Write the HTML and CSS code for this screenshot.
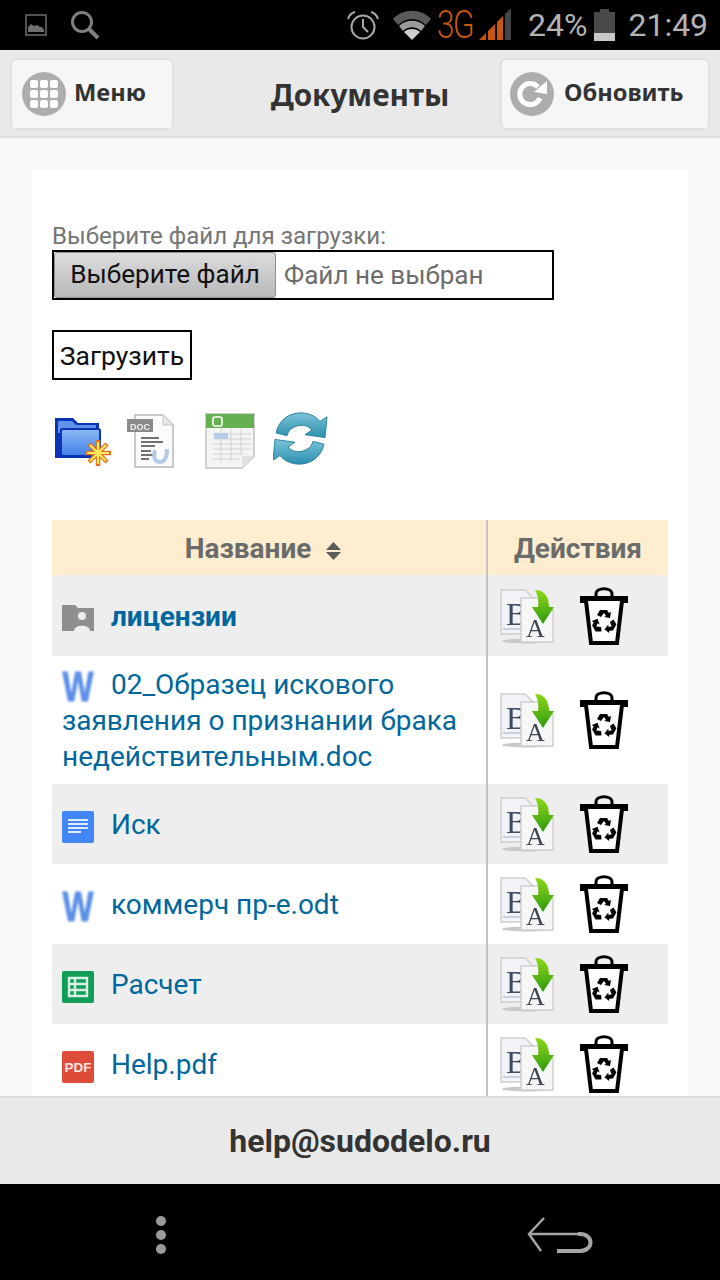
FILE: index.html
```html
<!DOCTYPE html>
<html lang="ru">
<head>
    <meta charset="UTF-8">
    <meta name="viewport" content="width=device-width, initial-scale=1.0">
    <title>Документы</title>
    <link rel="stylesheet" href="styles.css">
</head>
<body>
    <svg class="defs" width="0" height="0">
        <defs>
            <linearGradient id="arrow-green" x1="0" y1="0" x2="0" y2="1">
                <stop offset="0" stop-color="#8fd61c"/>
                <stop offset="1" stop-color="#2f9a0c"/>
            </linearGradient>
            <linearGradient id="folder-blue" x1="0" y1="0" x2="0" y2="1">
                <stop offset="0" stop-color="#8dbaf7"/>
                <stop offset="1" stop-color="#3f7fe6"/>
            </linearGradient>
            <linearGradient id="sync-blue" x1="0" y1="0" x2="0" y2="1">
                <stop offset="0" stop-color="#7cc4d8"/>
                <stop offset="1" stop-color="#2a8fb0"/>
            </linearGradient>
            <symbol id="convert" viewBox="0 0 56 56">
                <ellipse cx="28" cy="53" rx="26" ry="2.5" fill="#c9c9c9"/>
                <path d="M1 2h24l8 8v36H1z" fill="#f1f3f6" stroke="#cfcfcf" stroke-width="1.5"/>
                <text x="6" y="37" class="svg-serif" font-size="32" fill="#3a4a60">B</text>
                <path d="M3 41h20" stroke="#b7c6d8" stroke-width="1.5"/>
                <path d="M21 10h20l12 12v32H21z" fill="#f7f7f7" stroke="#cfcfcf" stroke-width="1.5"/>
                <text x="26" y="49" class="svg-serif" font-size="26" fill="#3a4656">A</text>
                <path d="M35 2c9 0 14 6 14 17h5L43 36 32 19h6c1-6 0-12-3-17z" fill="url(#arrow-green)"/>
            </symbol>
            <symbol id="trash" viewBox="0 0 48 58">
                <path d="M16 9V7c0-7 16-7 16 0v2" fill="none" stroke="#000" stroke-width="3"/>
                <rect x="0" y="9" width="48" height="7" fill="#000"/>
                <path d="M6 14l5 42h26l5-42" fill="#fff" stroke="#000" stroke-width="4"/>
                <path d="M20 23h7l2 3 2-1-1 6-6-1 2-1-2-3-3 4-4-2z" fill="#000"/>
                <path d="M20 23h7l2 3 2-1-1 6-6-1 2-1-2-3-3 4-4-2z" fill="#000" transform="rotate(120 24 35)"/>
                <path d="M20 23h7l2 3 2-1-1 6-6-1 2-1-2-3-3 4-4-2z" fill="#000" transform="rotate(240 24 35)"/>
            </symbol>
            <symbol id="word" viewBox="0 0 32 32">
                <text x="0.5" y="30" textLength="31" lengthAdjust="spacingAndGlyphs" class="svg-word">W</text>
            </symbol>
        </defs>
    </svg>

    <div class="status-bar">
        <svg class="st-image" width="22" height="22" viewBox="0 0 22 22">
            <rect x="1" y="1" width="20" height="20" fill="none" stroke="#6f6f6f" stroke-width="1.5"/>
            <path d="M3 18v-5l3-3 3 2 3-1 3 2 2 0 2 3v2z" fill="#6f6f6f"/>
        </svg>
        <svg class="st-search" width="30" height="30" viewBox="0 0 30 30">
            <circle cx="12" cy="12" r="9.5" fill="none" stroke="#808080" stroke-width="3"/>
            <path d="M19 19l9 9" stroke="#808080" stroke-width="4"/>
        </svg>
        <svg class="st-alarm" width="33" height="30" viewBox="0 0 33 30">
            <circle cx="17" cy="17" r="11.5" fill="none" stroke="#a8a8a8" stroke-width="2"/>
            <path d="M17 9v8l5 5" fill="none" stroke="#a8a8a8" stroke-width="2"/>
            <path d="M2 9c1-3 3-6 7-7M32 9c-1-3-3-6-7-7" fill="none" stroke="#a8a8a8" stroke-width="2"/>
        </svg>
        <svg class="st-wifi" width="38" height="30" viewBox="0 0 38 30">
            <path d="M0 9c10-11 28-11 38 0l-5 6C25 7 13 7 5 15z" fill="#5a5a5a"/>
            <path d="M6 16c7-7 19-7 26 0l-4 5c-5-5-13-5-18 0z" fill="#9a9a9a"/>
            <path d="M11 22c4-4 12-4 16 0l-8 8z" fill="#d0d0d0"/>
        </svg>
        <span class="st-net">3G</span>
        <svg class="st-signal" width="32" height="32" viewBox="0 0 32 32">
            <path d="M0 31l7-7v7zM9 31V22l7-7v16zM18 31V13l6-6v24z" fill="#c8560f"/>
            <path d="M26 31V5l6-6v32z" fill="#444"/>
        </svg>
        <span class="st-text st-percent">24%</span>
        <svg class="st-battery" width="21" height="32" viewBox="0 0 21 32">
            <path d="M6 0h9v3h6v29H0V3h6z" fill="#4a4a4a"/>
            <rect y="24" width="21" height="8" fill="#c8c8c8"/>
        </svg>
        <span class="st-text st-time">21:49</span>
    </div>

    <header class="top-bar">
        <a class="top-btn btn-menu">
            <span class="round-ico">
                <span class="dots">
                    <i></i><i></i><i></i><i></i><i></i><i></i><i></i><i></i><i></i>
                </span>
            </span>
            <span class="top-btn-text">Меню</span>
        </a>
        <h1>Документы</h1>
        <a class="top-btn btn-refresh">
            <span class="round-ico">
                <svg width="44" height="44" viewBox="0 0 44 44">
                    <path d="M28 15A10.5 10.5 0 1 0 30 26" fill="none" stroke="#fff" stroke-width="5"/>
                    <path d="M24 20L37 9v13z" fill="#fff"/>
                </svg>
            </span>
            <span class="top-btn-text">Обновить</span>
        </a>
    </header>

    <main class="content">
        <div class="card">
            <form class="upload-form">
                <label for="file">Выберите файл для загрузки:</label>
                <div class="file-box" id="file">
                    <span class="file-btn">Выберите файл</span>
                    <span class="file-name">Файл не выбран</span>
                </div>
                <button type="button" class="upload-btn">Загрузить</button>
            </form>

            <div class="tools">
                <svg class="tool-folder" width="60" height="52" viewBox="0 0 60 52">
                    <path d="M1 3h18l5 5h21v35H1z" fill="#0a34b5"/>
                    <path d="M4 6h14l4 4h20v8H4z" fill="#5f93ea"/>
                    <rect x="7" y="14" width="39" height="27" rx="2" fill="url(#folder-blue)" stroke="#0a34b5" stroke-width="2"/>
                    <path d="M44 25v26M31 38h26M35 29l18 18M53 29L35 47" stroke="#e2701c" stroke-width="4.5"/>
                    <path d="M44 27v22M33 38h22M36 30l16 16M52 30L36 46" stroke="#ffe95e" stroke-width="2.2"/>
                </svg>
                <svg class="tool-doc" width="48" height="54" viewBox="0 0 48 54">
                    <path d="M8 1h28l10 10v42H8z" fill="#fbfbfb" stroke="#c9c9c9" stroke-width="2"/>
                    <path d="M36 1v10h10" fill="#e4e4e4" stroke="#c9c9c9"/>
                    <rect x="0" y="5" width="26" height="13" fill="#8a8a8a"/>
                    <text x="3" y="15.5" textLength="20" lengthAdjust="spacingAndGlyphs" class="svg-doc">DOC</text>
                    <path d="M14 24h18M14 28h22M14 32h14M14 37h10M14 41h12M14 45h8" stroke="#444" stroke-width="1.6"/>
                    <path d="M28 36c-2 8 0 12 5 12s7-5 7-13" fill="none" stroke="#b6cbe6" stroke-width="4"/>
                </svg>
                <svg class="tool-sheet" width="50" height="56" viewBox="0 0 50 56">
                    <path d="M1 1h48v42L37 55H1z" fill="#f4f4f4" stroke="#cfcfcf" stroke-width="2"/>
                    <rect x="1" y="1" width="48" height="14" fill="#65b050"/>
                    <rect x="8" y="4" width="9" height="9" rx="2" fill="none" stroke="#fff" stroke-width="1.6"/>
                    <path d="M8 21h38M8 26h38M8 31h38M8 36h38M8 41h30M8 46h26M16 16v34M26 16v32M36 16v26" stroke="#d2d2d2"/>
                    <rect x="9" y="20" width="14" height="6" fill="#b6cdea"/>
                    <path d="M37 55V43h12z" fill="#e2e2e2"/>
                </svg>
                <svg class="tool-sync" width="56" height="53" viewBox="3 2 56 56" preserveAspectRatio="none">
                    <path d="M6 24C9 10 20 2 33 3c8 1 13 4 17 9l7-5-2 22-20-3 7-5c-5-6-12-6-18-3-4 2-6 5-7 9z" fill="url(#sync-blue)" stroke="#2b7f9c"/>
                    <path d="M54 36c-3 14-14 22-27 21-8-1-13-4-17-9l-7 5 2-22 20 3-7 5c5 6 12 6 18 3 4-2 6-5 7-9z" fill="url(#sync-blue)" stroke="#2b7f9c"/>
                </svg>
            </div>

            <table class="docs">
                <thead>
                    <tr>
                        <th class="col-name">
                            Название
                            <svg class="sort-ico" width="15" height="18" viewBox="0 0 15 18">
                                <path d="M7.5 0L15 8H0zM0 10h15l-7.5 8z" fill="#5c5c5c"/>
                            </svg>
                        </th>
                        <th class="col-actions">Действия</th>
                    </tr>
                </thead>
                <tbody>
                    <tr class="row-folder">
                        <td class="col-name">
                            <svg class="file-ico" width="32" height="26" viewBox="0 0 32 26">
                                <path d="M0 0h13l3 3h16v23H0z" fill="#8f8f8f"/>
                                <circle cx="20" cy="11" r="4" fill="#eee"/>
                                <path d="M12 26c0-7 16-7 16 0z" fill="#eee"/>
                            </svg>
                            <a class="folder-link">лицензии</a>
                        </td>
                        <td class="col-actions">
                            <svg class="act-convert"><use href="#convert"/></svg>
                            <svg class="act-trash"><use href="#trash"/></svg>
                        </td>
                    </tr>
                    <tr class="row-tall">
                        <td class="col-name">
                            <svg class="file-ico word-ico" width="32" height="32"><use href="#word"/></svg>
                            <a>02_Образец искового заявления о признании брака недействительным.doc</a>
                        </td>
                        <td class="col-actions">
                            <svg class="act-convert"><use href="#convert"/></svg>
                            <svg class="act-trash"><use href="#trash"/></svg>
                        </td>
                    </tr>
                    <tr>
                        <td class="col-name">
                            <svg class="file-ico" width="32" height="32" viewBox="0 0 32 32">
                                <rect width="32" height="32" rx="2" fill="#4285f4"/>
                                <path d="M6 9h20M6 13h20M6 17h20M6 21h13" stroke="#dfeafd" stroke-width="2"/>
                            </svg>
                            <a>Иск</a>
                        </td>
                        <td class="col-actions">
                            <svg class="act-convert"><use href="#convert"/></svg>
                            <svg class="act-trash"><use href="#trash"/></svg>
                        </td>
                    </tr>
                    <tr>
                        <td class="col-name">
                            <svg class="file-ico word-ico" width="32" height="32"><use href="#word"/></svg>
                            <a>коммерч пр-е.odt</a>
                        </td>
                        <td class="col-actions">
                            <svg class="act-convert"><use href="#convert"/></svg>
                            <svg class="act-trash"><use href="#trash"/></svg>
                        </td>
                    </tr>
                    <tr>
                        <td class="col-name">
                            <svg class="file-ico" width="32" height="32" viewBox="0 0 32 32">
                                <rect width="32" height="32" rx="2" fill="#0f9d58"/>
                                <path d="M7 7h18v18H7zM7 13h18M7 19h18M13 7v18" fill="none" stroke="#d6f0e2" stroke-width="2.4"/>
                            </svg>
                            <a>Расчет</a>
                        </td>
                        <td class="col-actions">
                            <svg class="act-convert"><use href="#convert"/></svg>
                            <svg class="act-trash"><use href="#trash"/></svg>
                        </td>
                    </tr>
                    <tr>
                        <td class="col-name">
                            <svg class="file-ico" width="32" height="32" viewBox="0 0 32 32">
                                <rect width="32" height="32" rx="2" fill="#dd4b39"/>
                                <text x="2.5" y="21" textLength="27" lengthAdjust="spacingAndGlyphs" class="svg-pdf">PDF</text>
                            </svg>
                            <a>Help.pdf</a>
                        </td>
                        <td class="col-actions">
                            <svg class="act-convert"><use href="#convert"/></svg>
                            <svg class="act-trash"><use href="#trash"/></svg>
                        </td>
                    </tr>
                </tbody>
            </table>
        </div>
    </main>

    <footer class="footer">help@sudodelo.ru</footer>

    <div class="nav-bar">
        <span class="nav-dots"><i></i><i></i><i></i></span>
        <svg class="nav-back" width="68" height="36" viewBox="0 0 68 36">
            <path d="M18 1L3 17l12 17M4 17h50" fill="none" stroke="#a5a5a5" stroke-width="2.5"/>
            <path d="M52 17h2c14 0 14 17 0 17H31" fill="none" stroke="#a5a5a5" stroke-width="4"/>
        </svg>
    </div>
</body>
</html>
```

FILE: styles.css
```css
* {
    box-sizing: border-box;
}
html, body {
    margin: 0;
    padding: 0;
}
body {
    width: 720px;
    height: 1280px;
    display: flex;
    flex-direction: column;
    overflow: hidden;
    font-family: Roboto, "Liberation Sans", sans-serif;
    background: #000;
}
.defs {
    position: absolute;
}
.svg-serif {
    font-family: "Liberation Serif", serif;
}
.svg-doc {
    font-family: "Liberation Sans", sans-serif;
    font-size: 9.5px;
    font-weight: bold;
    fill: #eee;
}
.svg-pdf {
    font-family: "Liberation Sans", sans-serif;
    font-size: 13px;
    font-weight: bold;
    fill: #fbe3e0;
}
.svg-word {
    font-family: "Liberation Sans", sans-serif;
    font-size: 42px;
    font-weight: bold;
    fill: #5b8fe8;
    stroke: #5b8fe8;
    stroke-width: 0.8px;
}

/* status bar */
.status-bar {
    height: 50px;
    flex: none;
    display: flex;
    align-items: center;
    background: #000;
    color: #b4b4b4;
    padding-left: 25px;
}
.st-search {
    margin-left: 23px;
}
.st-alarm {
    margin-left: 246px;
}
.st-wifi {
    margin-left: 14px;
}
.st-net {
    margin-left: 6px;
    color: #c8560f;
    font-size: 38px;
    width: 38px;
    letter-spacing: -2px;
    font-weight: 300;
    transform: scaleX(0.84);
    transform-origin: left center;
}
.st-signal {
    margin-left: 4px;
}
.st-text {
    font-size: 32px;
    font-weight: 400;
}
.st-percent {
    margin-left: 17px;
}
.st-battery {
    margin-left: 7px;
}
.st-time {
    margin-left: 13px;
}

/* header */
.top-bar {
    height: 88px;
    flex: none;
    display: flex;
    align-items: flex-start;
    justify-content: space-between;
    padding: 8px 10px 0;
    background: #e9e9e9;
    border-bottom: 2px solid #dedede;
    color: #333;
}
.top-bar h1 {
    margin: 12px 0 0;
    flex: 1;
    padding-left: 46px;
    text-align: center;
    font-family: "Noto Sans", sans-serif;
    font-size: 29.7px;
    font-weight: 700;
    line-height: 50px;
}
.top-btn {
    height: 72px;
    display: flex;
    align-items: center;
    background: #f6f6f6;
    border: 2px solid #e0e0e0;
    border-radius: 6px;
    font-family: "Noto Sans", sans-serif;
    font-size: 23.7px;
    font-weight: 700;
}
.top-btn-text {
    margin-bottom: 4px;
}
.btn-menu {
    width: 164px;
    padding-left: 10px;
    gap: 8px;
}
.btn-refresh {
    width: 210px;
    padding-left: 8px;
    gap: 10px;
}
.round-ico {
    width: 44px;
    height: 44px;
    flex: none;
    border-radius: 50%;
    background: #adadad;
    display: flex;
    align-items: center;
    justify-content: center;
}
.dots {
    display: grid;
    grid-template-columns: repeat(3, 8px);
    grid-auto-rows: 8px;
    gap: 2px;
}
.dots i {
    background: #fff;
    border-radius: 2px;
}

/* content */
.content {
    flex: 1;
    min-height: 0;
    overflow: hidden;
    background: #f9f9f9;
    padding: 32px 32px 0;
}
.card {
    background: #fff;
    padding: 52px 20px 0;
    height: 100%;
}
.upload-form label {
    display: block;
    font-size: 24.1px;
    line-height: 28px;
    color: #757575;
}
.file-box {
    width: 502px;
    height: 50px;
    display: flex;
    align-items: center;
    border: 2px solid #000;
    font-size: 26.1px;
}
.file-btn {
    width: 222px;
    height: 46px;
    text-align: center;
    line-height: 42px;
    color: #111;
    background: linear-gradient(#dcdcdc, #b9b9b9);
    border: 1px solid #8f8f8f;
    border-radius: 3px;
}
.file-name {
    margin-left: 8px;
    color: #6c6c6c;
}
.upload-btn {
    display: block;
    margin-top: 30px;
    width: 140px;
    height: 50px;
    padding: 0;
    background: #fff;
    border: 2px solid #000;
    font-family: inherit;
    font-size: 26.5px;
    color: #111;
}
.tools {
    display: flex;
    align-items: flex-start;
    margin-top: 32px;
    padding-left: 2px;
    height: 108px;
}
.tools svg {
    filter: blur(0.4px);
}
.tool-folder {
    margin-top: 3px;
}
.tool-doc {
    margin-left: 13px;
    margin-top: 2px;
}
.tool-sheet {
    margin-left: 30px;
    margin-top: 1px;
}
.tool-sync {
    margin-left: 18px;
}

/* table */
.docs {
    width: 616px;
    border-collapse: collapse;
    table-layout: fixed;
    font-size: 28px;
    line-height: 36px;
}
.docs th {
    height: 55px;
    padding: 2px 0 0;
    background: #feedcf;
    color: #6b6b6b;
    font-size: 28px;
    font-weight: 700;
    text-align: center;
}
.docs .col-name {
    width: 435px;
}
.docs th.col-name {
    padding-right: 12px;
}
.docs .col-actions {
    border-left: 2px solid #c4c4c4;
}
.docs td {
    height: 80px;
    padding: 0;
    vertical-align: middle;
}
.docs td.col-name {
    padding: 2px 10px 0;
}
.docs td.col-actions {
    white-space: nowrap;
    font-size: 0;
    padding-left: 12px;
}
.docs tbody tr:nth-child(odd) {
    background: #eeeeee;
}
.docs .row-folder td {
    height: 81px;
}
.docs .row-tall td {
    height: 128px;
}
.docs a {
    color: #00679c;
}
.docs a.folder-link {
    font-weight: 700;
}
.sort-ico {
    margin-left: 8px;
    vertical-align: -2px;
}
.file-ico {
    vertical-align: middle;
    margin-right: 10px;
}
.word-ico {
    filter: blur(0.8px);
}
.act-convert {
    width: 56px;
    height: 56px;
    vertical-align: middle;
    filter: blur(0.3px);
}
.act-trash {
    width: 48px;
    height: 58px;
    margin-left: 24px;
    vertical-align: middle;
}

/* footer */
.footer {
    height: 88px;
    flex: none;
    text-align: center;
    line-height: 86px;
    background: #e9e9e9;
    border-top: 2px solid #dcdcdc;
    color: #333;
    font-size: 32px;
    font-weight: 700;
}
.nav-bar {
    height: 96px;
    flex: none;
    display: flex;
    align-items: center;
    padding: 6px 126px 0 156px;
    justify-content: space-between;
    background: #000;
}
.nav-dots {
    display: flex;
    flex-direction: column;
    gap: 4.5px;
}
.nav-dots i {
    width: 10px;
    height: 9.5px;
    border-radius: 50%;
    background: #9a9a9a;
}
```
